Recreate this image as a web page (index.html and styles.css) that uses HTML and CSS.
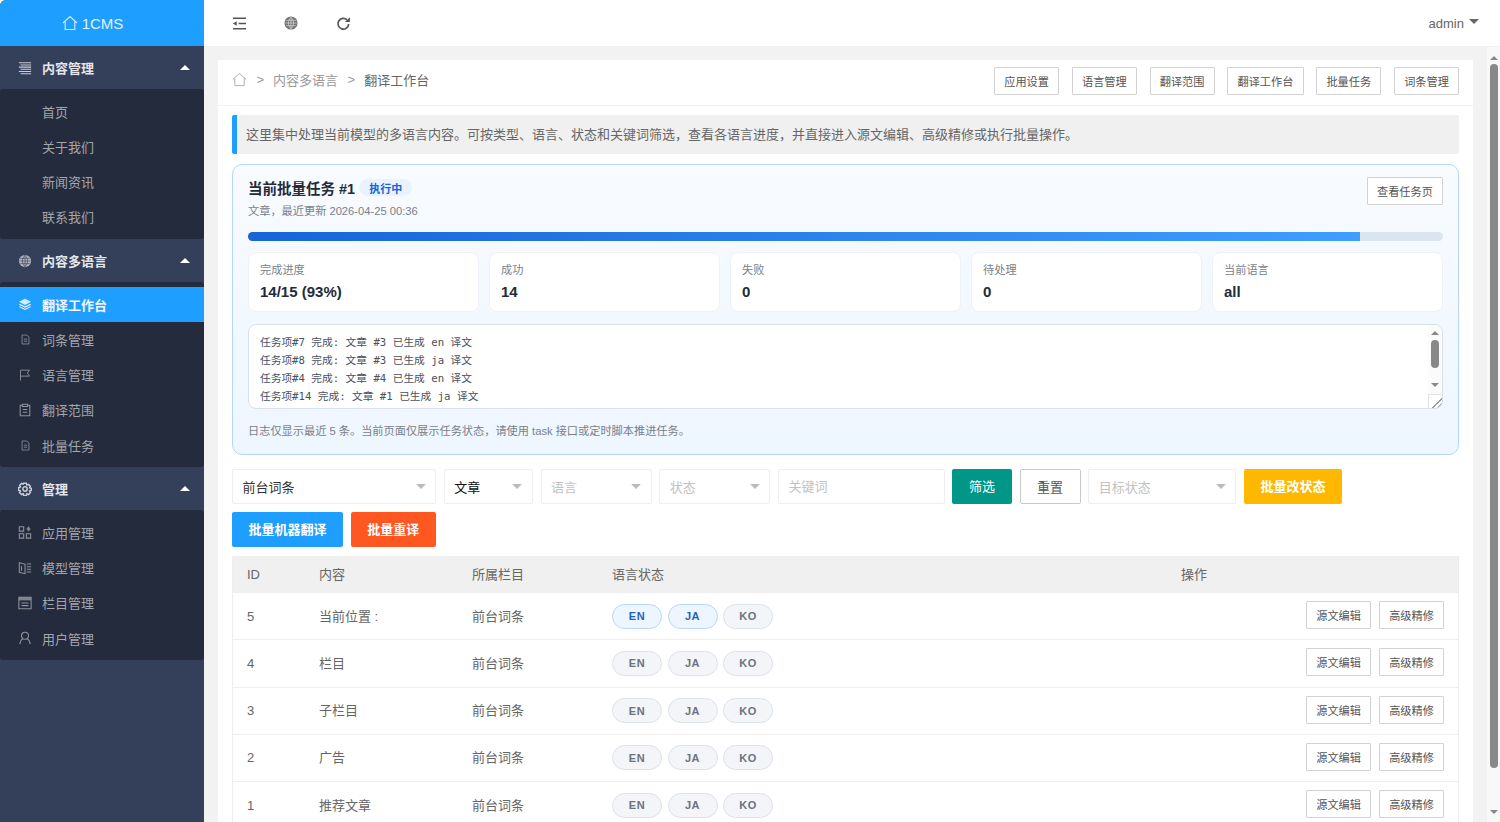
FILE: index.html
```html
<!DOCTYPE html>
<html lang="zh">
  <head>
    <meta charset="utf-8">
    <title>1CMS</title>
    <link rel="stylesheet" href="styles.css">
  </head>
  <body>
    <div class="side">
      <div class="logo">
        <svg class="logo-icon" viewBox="0 0 16 16"><path d="M1 8 8 1.5 15 8M3.2 6.5V14.5H12.8V6.5"/></svg>
        <span>1CMS</span>
      </div>

      <div class="group">
        <svg class="ico" viewBox="0 0 16 16"><path d="M1 2h14M3 4.5h12M1 7h14M3 9.5h12M1 12h14M3 14.5h12"/></svg>
        内容管理<i class="up"></i>
      </div>
      <div class="sub">
        <div class="item">首页</div>
        <div class="item">关于我们</div>
        <div class="item">新闻资讯</div>
        <div class="item">联系我们</div>
      </div>

      <div class="group">
        <svg class="ico" viewBox="0 0 16 16"><circle cx="8" cy="8" r="7" class="solid"/><path class="thin" d="M1.5 8h13M2.5 5h11M2.5 11h11M8 1.5v13M8 1.5c-4 4-4 9 0 13M8 1.5c4 4 4 9 0 13"/></svg>
        内容多语言<i class="up"></i>
      </div>
      <div class="sub">
        <div class="item active">
          <svg class="ico" viewBox="0 0 16 16"><path class="solid" d="M8 2 15 5.5 8 9 1 5.5Z"/><path d="M1.5 8.3 8 11.5 14.5 8.3M1.5 11 8 14.2 14.5 11"/></svg>
          翻译工作台
        </div>
        <div class="item">
          <svg class="ico small" viewBox="0 0 16 16"><path d="M3 1.5h7l3 3v10H3ZM5.5 7.5h5M5.5 10.5h5"/></svg>
          词条管理
        </div>
        <div class="item">
          <svg class="ico flag" viewBox="0 0 16 16"><path d="M2 15.5V1.500h12l-3 4 3 4H2"/></svg>
          语言管理
        </div>
        <div class="item">
          <svg class="ico" viewBox="0 0 16 16"><path d="M5 2.500H2.500v12h11v-12H11M5 1.500h6v2.500H5ZM5.500 7.500h5M5.500 10.500h5"/></svg>
          翻译范围
        </div>
        <div class="item">
          <svg class="ico small" viewBox="0 0 16 16"><path d="M3 1.5h7l3 3v10H3ZM5.5 7.5h5M5.5 10.5h5"/></svg>
          批量任务
        </div>
      </div>

      <div class="group">
        <svg class="ico gear" viewBox="0 0 16 16"><circle cx="8" cy="8" r="2.500"/><path d="M6.500 1.500h3l.6 2 1.900-.8 2.100 2.100-.9 1.900 2 .6v2.400l-2 .6.900 1.900-2.100 2.100-1.900-.9-.6 2h-3l-.6-2-1.900.9-2.100-2.100.9-1.900-2-.6V6.300l2-.6-.9-1.900 2.100-2.100 1.900.8Z"/></svg>
        管理<i class="up"></i>
      </div>
      <div class="sub">
        <div class="item">
          <svg class="ico" viewBox="0 0 16 16"><path d="M1.500 2h5v5h-5ZM1.500 10h5v5h-5ZM9.500 10h5v5h-5Z"/><path class="solid" d="M12 1.500 14.500 4.500 12 7.500 9.500 4.500Z"/></svg>
          应用管理
        </div>
        <div class="item">
          <svg class="ico" viewBox="0 0 16 16"><path d="M1.500 2 8 3.500v11L1.500 13ZM4 6v5M10 3.500h5M10 6.500h5M10 9.500h5M10 12.500h5"/></svg>
          模型管理
        </div>
        <div class="item">
          <svg class="ico" viewBox="0 0 16 16"><path class="solid" d="M1 1.500h14V5H1Z"/><path d="M1 1.500h14v13H1ZM4 8h8M4 11h8"/></svg>
          栏目管理
        </div>
        <div class="item">
          <svg class="ico" viewBox="0 0 16 16"><circle cx="8" cy="5.500" r="4"/><path d="M2 15c.5-3.500 2.500-5.500 3.500-6M14 15c-.5-3.500-2.500-5.500-3.500-6"/></svg>
          用户管理
        </div>
      </div>
    </div>

    <div class="right">
      <div class="top">
        <svg class="top-ico" viewBox="0 0 16 16"><path d="M1 2.500h14M7 8h8M1 13.500h14"/><path class="fill" d="M1 8 5 5.500v5Z"/></svg>
        <svg class="top-ico globe" viewBox="0 0 16 16"><circle cx="8" cy="8" r="7.500" class="solid"/><path class="thin" d="M1.500 8h13M2.500 5h11M2.500 11h11M8 1.500v13M8 1.500c-4 4-4 9 0 13M8 1.500c4 4 4 9 0 13"/></svg>
        <svg class="top-ico reload" viewBox="0 0 16 16"><path d="M13.500 8.500a5.700 5.700 0 1 1-1.700-4.300"/><path class="fill" d="M14.800 1.200v5.300H9.500Z"/></svg>
        <div class="user">admin<i class="down"></i></div>
      </div>

      <div class="below">
        <div class="main">
          <div class="card">
            <div class="crumb-row">
              <div class="crumbs">
                <svg class="home" viewBox="0 0 16 16"><path d="M.8 8 8 1.500 15.200 8M3 6.300V14.500H13V6.300"/></svg>
                <span class="sep">&gt;</span>
                <span>内容多语言</span>
                <span class="sep">&gt;</span>
                <span class="here">翻译工作台</span>
              </div>
              <div class="crumb-btns">
                <a class="btn">应用设置</a>
                <a class="btn">语言管理</a>
                <a class="btn">翻译范围</a>
                <a class="btn">翻译工作台</a>
                <a class="btn">批量任务</a>
                <a class="btn">词条管理</a>
              </div>
            </div>

            <div class="card-body">
              <div class="tip">这里集中处理当前模型的多语言内容。可按类型、语言、状态和关键词筛选&#65292;查看各语言进度&#65292;并直接进入源文编辑、高级精修或执行批量操作。</div>

              <div class="task">
                <div class="task-head">
                  <div>
                    <div class="task-title">当前批量任务 #1 <span class="badge">执行中</span></div>
                    <div class="task-sub">文章&#65292;最近更新 2026-04-25 00:36</div>
                  </div>
                  <a class="btn">查看任务页</a>
                </div>
                <div class="bar"><div class="bar-fill" style="width: 93.05%"></div></div>
                <div class="stats">
                  <div class="stat"><div class="stat-label">完成进度</div><div class="stat-value">14/15 (93%)</div></div>
                  <div class="stat"><div class="stat-label">成功</div><div class="stat-value">14</div></div>
                  <div class="stat"><div class="stat-label">失败</div><div class="stat-value">0</div></div>
                  <div class="stat"><div class="stat-label">待处理</div><div class="stat-value">0</div></div>
                  <div class="stat"><div class="stat-label">当前语言</div><div class="stat-value">all</div></div>
                </div>
                <div class="log">
                  <div class="log-text">任务项#7 完成: 文章 #3 已生成 en 译文
任务项#8 完成: 文章 #3 已生成 ja 译文
任务项#4 完成: 文章 #4 已生成 en 译文
任务项#14 完成: 文章 #1 已生成 ja 译文</div>
                  <div class="log-bar">
                    <i class="arrow-up"></i>
                    <div class="log-thumb"></div>
                    <i class="arrow-down"></i>
                    <div class="grip"></div>
                  </div>
                </div>
                <div class="note">日志仅显示最近 5 条。当前页面仅展示任务状态&#65292;请使用 task 接口或定时脚本推进任务。</div>
              </div>

              <div class="filters">
                <div class="sel w204 on">前台词条<i></i></div>
                <div class="sel w89 on strong">文章<i></i></div>
                <div class="sel w111">语言<i></i></div>
                <div class="sel w111">状态<i></i></div>
                <input class="kw" placeholder="关键词">
                <a class="act teal">筛选</a>
                <a class="act plain">重置</a>
                <div class="sel w148">目标状态<i></i></div>
                <a class="act amber">批量改状态</a>
                <a class="act blue">批量机器翻译</a>
                <a class="act orange">批量重译</a>
              </div>

              <div class="table">
                <div class="tr th">
                  <div class="num">ID</div><div>内容</div><div>所属栏目</div><div>语言状态</div><div>操作</div>
                </div>
                <div class="tr">
                  <div class="num">5</div><div>当前位置 :</div><div>前台词条</div>
                  <div class="pills"><span class="pill done">EN</span><span class="pill done">JA</span><span class="pill">KO</span></div>
                  <div class="ops"><a class="btn">源文编辑</a><a class="btn">高级精修</a></div>
                </div>
                <div class="tr">
                  <div class="num">4</div><div>栏目</div><div>前台词条</div>
                  <div class="pills"><span class="pill">EN</span><span class="pill">JA</span><span class="pill">KO</span></div>
                  <div class="ops"><a class="btn">源文编辑</a><a class="btn">高级精修</a></div>
                </div>
                <div class="tr">
                  <div class="num">3</div><div>子栏目</div><div>前台词条</div>
                  <div class="pills"><span class="pill">EN</span><span class="pill">JA</span><span class="pill">KO</span></div>
                  <div class="ops"><a class="btn">源文编辑</a><a class="btn">高级精修</a></div>
                </div>
                <div class="tr">
                  <div class="num">2</div><div>广告</div><div>前台词条</div>
                  <div class="pills"><span class="pill">EN</span><span class="pill">JA</span><span class="pill">KO</span></div>
                  <div class="ops"><a class="btn">源文编辑</a><a class="btn">高级精修</a></div>
                </div>
                <div class="tr">
                  <div class="num">1</div><div>推荐文章</div><div>前台词条</div>
                  <div class="pills"><span class="pill">EN</span><span class="pill">JA</span><span class="pill">KO</span></div>
                  <div class="ops"><a class="btn">源文编辑</a><a class="btn">高级精修</a></div>
                </div>
              </div>
            </div>
          </div>
        </div>

        <div class="vbar">
          <i class="arrow-up"></i>
          <div class="vbar-thumb"></div>
          <i class="arrow-down"></i>
        </div>
      </div>
    </div>
  </body>
</html>
```

FILE: styles.css
```css
* {
    box-sizing: border-box;
}
html, body {
    height: 100%;
}
body {
    margin: 0;
    display: flex;
    overflow: hidden;
    font-family: "Liberation Sans", "Noto Sans CJK SC", sans-serif;
    font-size: 13px;
    color: #666;
    background-color: #fff;
}

/* sidebar */
.side {
    width: 204px;
    flex: none;
    background-color: #343f5a;
    border-top-left-radius: 6px;
    overflow: hidden;
    color: #eee;
}
.logo {
    height: 46px;
    display: flex;
    align-items: center;
    justify-content: center;
    gap: 4px;
    padding-right: 19px;
    font-size: 15px;
    color: #e0f1ff;
    background-color: #1e9fff;
}
.logo-icon {
    width: 16px;
    height: 16px;
    fill: none;
    stroke: #d6ecff;
    stroke-width: 1.1;
}
.group {
    height: 43px;
    display: flex;
    align-items: center;
    padding: 0 14px 0 42px;
    position: relative;
    font-weight: bold;
    color: #e4e6ea;
}
.up {
    margin-left: auto;
    border: 5.5px solid transparent;
    border-top: 0;
    border-bottom-color: #fff;
}
.sub {
    padding: 4.5px 0;
    background-color: #232b3c;
    border-radius: 3px;
}
.item {
    height: 35.25px;
    display: flex;
    align-items: center;
    padding-left: 42px;
    position: relative;
    color: #a3a6ac;
}
.item.active {
    color: #f2f8ff;
    font-weight: bold;
    background-color: #1e9fff;
}
.ico {
    position: absolute;
    left: 18px;
    top: 50%;
    width: 14px;
    height: 14px;
    margin-top: -7px;
    fill: none;
    stroke: currentColor;
    stroke-width: 1.2;
    opacity: .85;
}
.ico.small {
    left: 20px;
    width: 11px;
    height: 11px;
    margin-top: -5.5px;
}
.ico.flag {
    left: 19px;
    width: 12px;
    height: 12px;
    margin-top: -6px;
}
.ico.gear {
    stroke-width: 1.7;
}
.solid {
    fill: currentColor;
    stroke: none;
    opacity: .85;
}
.thin {
    stroke: #343f5a;
    stroke-width: .7;
}
.active .ico {
    opacity: 1;
}

/* top bar */
.right {
    flex: 1;
    min-width: 0;
    display: flex;
    flex-direction: column;
    background-color: #f2f2f2;
}
.top {
    height: 47px;
    flex: none;
    display: flex;
    align-items: center;
    padding: 0 21px 0 28px;
    background-color: #fff;
    border-bottom: 1px solid #f0f0f0;
}
.top-ico {
    width: 15px;
    height: 15px;
    margin-right: 37px;
    fill: none;
    stroke: #555;
    stroke-width: 1.6;
}
.top-ico .fill {
    fill: #555;
    stroke: none;
}
.globe {
    width: 14px;
    height: 14px;
    color: #5c5c5c;
}
.globe .thin {
    stroke: #e4e4e4;
}
.reload {
    stroke-width: 1.8;
    margin-left: 1px;
}
.user {
    margin-left: auto;
    display: flex;
    align-items: center;
    color: #666;
}
.down {
    margin-left: 5px;
    margin-bottom: 3px;
    border: 5px solid transparent;
    border-bottom: 0;
    border-top-color: #666;
}

/* pane and its scrollbar */
.below {
    flex: 1;
    min-height: 0;
    display: flex;
}
.main {
    flex: 1;
    min-width: 0;
    overflow: hidden;
    padding: 13px 14px 0;
}
.vbar {
    width: 13px;
    flex: none;
    display: flex;
    flex-direction: column;
    align-items: center;
    padding: 9px 0 8px 1px;
    background-color: #f8f8f8;
}
.vbar-thumb {
    width: 8px;
    height: 704px;
    margin: 4px 0 auto;
    background-color: #888;
    border-radius: 4px;
}
.arrow-up, .arrow-down {
    flex: none;
    border: 4px solid transparent;
}
.arrow-up {
    border-top: 0;
    border-bottom-color: #888;
}
.arrow-down {
    border-bottom: 0;
    border-top-color: #888;
}

.card {
    background-color: #fff;
    border-radius: 2px;
}
.crumb-row {
    height: 46px;
    display: flex;
    align-items: center;
    justify-content: space-between;
    padding: 0 14px 4px;
    border-bottom: 1px solid #f2f2f2;
}
.crumbs {
    display: flex;
    align-items: center;
    margin-top: -2px;
    color: #999;
}
.home {
    width: 15px;
    height: 15px;
    margin-top: -1px;
    fill: none;
    stroke: #aaa;
    stroke-width: 1;
}
.sep {
    margin: 0 9px 0 9.5px;
}
.here {
    color: #666;
}
.crumb-btns {
    display: flex;
    gap: 12.8px;
}
.btn {
    height: 28px;
    display: inline-flex;
    align-items: center;
    padding: 0 9.1px;
    font-size: 11.2px;
    color: #555;
    background-color: #fff;
    border: 1px solid #d2d2d2;
    border-radius: 1px;
}

.card-body {
    padding: 9px 14px 0;
}
.tip {
    height: 39px;
    display: flex;
    align-items: center;
    padding: 0 0 2px 9px;
    background-color: #f0f0f0;
    border-left: 5px solid #1e9fff;
    border-radius: 2px;
}

/* task card */
.task {
    margin-top: 10px;
    padding: 12px 15px 14px;
    background: linear-gradient(180deg, #f8fbff, #eef6ff);
    border: 1px solid #b6d7fb;
    border-radius: 10px;
}
.task-head {
    height: 44px;
    display: flex;
    justify-content: space-between;
    align-items: flex-start;
}
.task-title {
    display: flex;
    align-items: center;
    gap: 4px;
    height: 20px;
    font-size: 14.5px;
    font-weight: bold;
    color: #222b3a;
}
.badge {
    height: 17px;
    margin-top: 1px;
    padding: 0 10px;
    display: flex;
    align-items: center;
    font-size: 11px;
    color: #1565d8;
    background-color: #e8f3ff;
    border-radius: 9px;
}
.task-sub {
    margin-top: 5px;
    font-size: 11.2px;
    line-height: 18px;
    color: #7a7f88;
}
.bar {
    height: 9px;
    margin-top: 11px;
    background-color: #dbe5f0;
    border-radius: 5px;
    overflow: hidden;
}
.bar-fill {
    height: 100%;
    background: linear-gradient(90deg, #1565d8, #409eff);
}
.stats {
    display: grid;
    grid-template-columns: repeat(5, 1fr);
    gap: 10px;
    margin-top: 11px;
}
.stat {
    height: 60px;
    padding: 9px 11px;
    background-color: #fff;
    border: 1px solid #edf2f8;
    border-radius: 8px;
}
.stat-label {
    font-size: 11.2px;
    line-height: 16px;
    color: #7a7f88;
}
.stat-value {
    margin-top: 4px;
    font-size: 15px;
    line-height: 20px;
    font-weight: bold;
    color: #222b3a;
}
.log {
    height: 85px;
    margin-top: 12px;
    display: flex;
    background-color: #fff;
    border: 1px solid #d8e0ec;
    border-radius: 8px;
    overflow: hidden;
}
.log-text {
    flex: 1;
    min-width: 0;
    margin-top: 9px;
    padding-left: 11px;
    font-family: "DejaVu Sans Mono", "Noto Sans CJK SC", monospace;
    font-size: 10.7px;
    line-height: 18px;
    color: #4a5160;
    white-space: pre;
}
.log-bar {
    width: 14px;
    flex: none;
    display: flex;
    flex-direction: column;
    align-items: center;
    padding-top: 6px;
    background-color: #fbfbfb;
}
.log-thumb {
    width: 8px;
    height: 28px;
    margin: 5px 0 auto;
    background-color: #888;
    border-radius: 4px;
}
.log-bar .arrow-down {
    margin-bottom: 7px;
}
.grip {
    width: 14px;
    height: 14px;
    flex: none;
    background: linear-gradient(135deg, #fff 60%, #999 60%, #999 67%, #fff 67%, #fff 78%, #999 78%, #999 85%, #fff 85%);
    border-top: 1px solid #e2e2e2;
    border-left: 1px solid #e2e2e2;
}
.note {
    margin-top: 13px;
    font-size: 11.2px;
    line-height: 18px;
    color: #7a7f88;
}

/* filters */
.filters {
    display: flex;
    flex-wrap: wrap;
    gap: 8px 7.75px;
    margin-top: 14px;
}
.sel, .kw {
    height: 35px;
    padding: 0 9.5px;
    font-family: inherit;
    font-size: 13px;
    color: #c2c2c2;
    background-color: #fff;
    border: 1px solid #eee;
    border-radius: 2px;
}
.sel {
    display: flex;
    align-items: center;
    justify-content: space-between;
}
.sel i {
    border: 5.5px solid transparent;
    border-bottom: 0;
    border-top-color: #bbb;
}
.sel.on {
    color: #333;
}
.sel.strong {
    color: #111;
}
.w204 { width: 204px; }
.w89 { width: 89px; }
.w111 { width: 111px; }
.w148 { width: 148px; }
.kw {
    width: 166.5px;
    outline: none;
}
.kw::placeholder {
    color: #c2c2c2;
}
.act {
    height: 35px;
    display: flex;
    align-items: center;
    justify-content: center;
    padding-bottom: 2px;
    font-weight: bold;
    color: #fff;
    border-radius: 2px;
}
.teal {
    width: 59.5px;
    background-color: #009688;
    font-weight: normal;
}
.plain {
    width: 61px;
    padding-bottom: 0;
    color: #555;
    font-weight: normal;
    background-color: #fff;
    border: 1px solid #c9c9c9;
}
.amber {
    width: 98px;
    background-color: #ffb800;
}
.blue {
    width: 111px;
    background-color: #1e9fff;
}
.orange {
    width: 85px;
    background-color: #ff5722;
}

/* table */
.table {
    margin-top: 9px;
    border: 1px solid #eee;
    border-bottom: 0;
}
.tr {
    height: 47.25px;
    display: grid;
    grid-template-columns: 72px 153px 140px 569px 1fr;
    align-items: center;
    border-bottom: 1px solid #eee;
}
.tr > div {
    padding-left: 14px;
    padding-bottom: 2px;
}
.tr > .num {
    padding-bottom: 0;
}
.tr.th {
    height: 36px;
    background-color: #f0f0f0;
}
.tr > .pills {
    display: flex;
    gap: 5.5px;
    padding-bottom: 0;
}
.pill {
    width: 50px;
    height: 25px;
    display: flex;
    align-items: center;
    justify-content: center;
    font-size: 11px;
    font-weight: bold;
    letter-spacing: .5px;
    color: #6b7280;
    background-color: #f3f5f8;
    border: 1px solid #dde2e8;
    border-radius: 13px;
}
.pill.done {
    color: #1e63c4;
    background-color: #edf5ff;
    border-color: #b8d6fb;
}
.tr .ops {
    display: flex;
    justify-content: flex-end;
    gap: 8px;
    padding-right: 14px;
}
```
